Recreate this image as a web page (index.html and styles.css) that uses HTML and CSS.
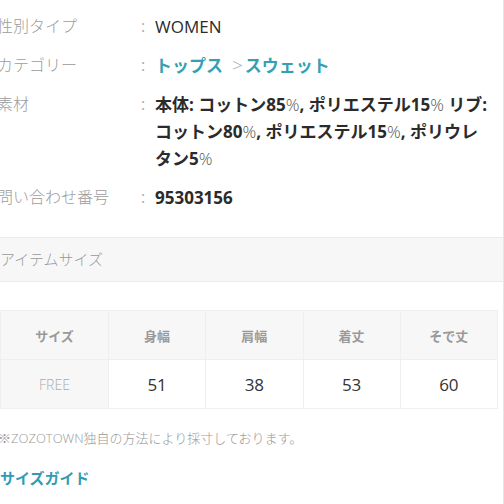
FILE: index.html
```html
<!DOCTYPE html>
<html lang="ja">
<head>
    <meta charset="UTF-8">
    <meta name="viewport" content="width=device-width, initial-scale=1.0">
    <title>商品情報</title>
    <link rel="stylesheet" href="styles.css">
</head>
<body>
    <div class="page">
        <dl class="spec">
            <dt>性別タイプ</dt>
            <dd class="colon">:</dd>
            <dd class="value">WOMEN</dd>

            <dt>カテゴリー</dt>
            <dd class="colon">:</dd>
            <dd class="value category"><a href="#">トップス</a><span class="sep">&gt;</span><a href="#">スウェット</a></dd>

            <dt>素材</dt>
            <dd class="colon">:</dd>
            <dd class="value bold">本体: コットン85<span class="pct">%</span>, ポリエステル15<span class="pct">%</span> リブ: コットン80<span class="pct">%</span>, ポリエステル15<span class="pct">%</span>, ポリウレタン5<span class="pct">%</span></dd>

            <dt>問い合わせ番号</dt>
            <dd class="colon">:</dd>
            <dd class="value bold">95303156</dd>
        </dl>

        <h2 class="band">アイテムサイズ</h2>

        <table class="size-table">
            <thead>
                <tr>
                    <th>サイズ</th>
                    <th>身幅</th>
                    <th>肩幅</th>
                    <th>着丈</th>
                    <th>そで丈</th>
                </tr>
            </thead>
            <tbody>
                <tr>
                    <th>FREE</th>
                    <td>51</td>
                    <td>38</td>
                    <td>53</td>
                    <td>60</td>
                </tr>
            </tbody>
        </table>

        <p class="note">※ZOZOTOWN独自の方法により採寸しております。</p>
        <a class="guide" href="#">サイズガイド</a>
    </div>
</body>
</html>
```

FILE: styles.css
```css
body {
    margin: 0;
    font-family: "Open Sans", "Noto Sans CJK JP", sans-serif;
    color: #333;
    background: #fff;
}
.page {
    width: 503px;
    height: 504px;
    border-right: 1px solid #e6e6e6;
    overflow: hidden;
}
.spec {
    display: grid;
    grid-template-columns: 141px 17px 336px;
    row-gap: 12px;
    margin: 13px 0 0 -3px;
    font-size: 16px;
    line-height: 27px;
}
.spec dt {
    color: #9c9c9c;
    font-weight: 300;
}
.spec dd {
    margin: 0;
}
.colon {
    color: #aaa;
    padding-left: 3px;
}
.value {
    color: #2b2b2b;
    font-size: 17px;
}
.bold {
    font-weight: 700;
}
.pct {
    font-weight: 300;
    color: #555;
}
.category a {
    color: #34a0b3;
    font-weight: 700;
    text-decoration: none;
}
.sep {
    color: #a5a5a5;
    font-weight: 300;
    font-size: 19px;
    margin: 0 2px 0 9px;
}
.band {
    margin: 26px 0 0;
    height: 43px;
    line-height: 43px;
    background: #f7f7f7;
    border-top: 1px solid #ebebeb;
    border-bottom: 1px solid #ebebeb;
    font-size: 15px;
    font-weight: 300;
    color: #999;
}
.size-table {
    width: 498px;
    margin-top: 28px;
    border-collapse: collapse;
    table-layout: fixed;
    text-align: center;
}
.size-table th, .size-table td {
    border: 1px solid #efefef;
}
.size-table thead th {
    height: 46px;
    background: #f7f7f7;
    color: #9a9a9a;
    font-size: 13px;
    font-weight: 700;
}
.size-table thead th:first-child {
    width: 105px;
}
.size-table tbody th {
    background: #f7f7f7;
    color: #aaa;
    font-size: 14px;
    font-weight: 300;
}
.size-table td {
    height: 46px;
    font-size: 17px;
    color: #333;
}
.note {
    margin: 19px 0 0 -2px;
    font-size: 13px;
    font-weight: 300;
    color: #999;
}
.guide {
    display: block;
    margin-top: 20px;
    font-size: 15px;
    font-weight: 700;
    color: #2f9cb4;
    text-decoration: none;
}
```
